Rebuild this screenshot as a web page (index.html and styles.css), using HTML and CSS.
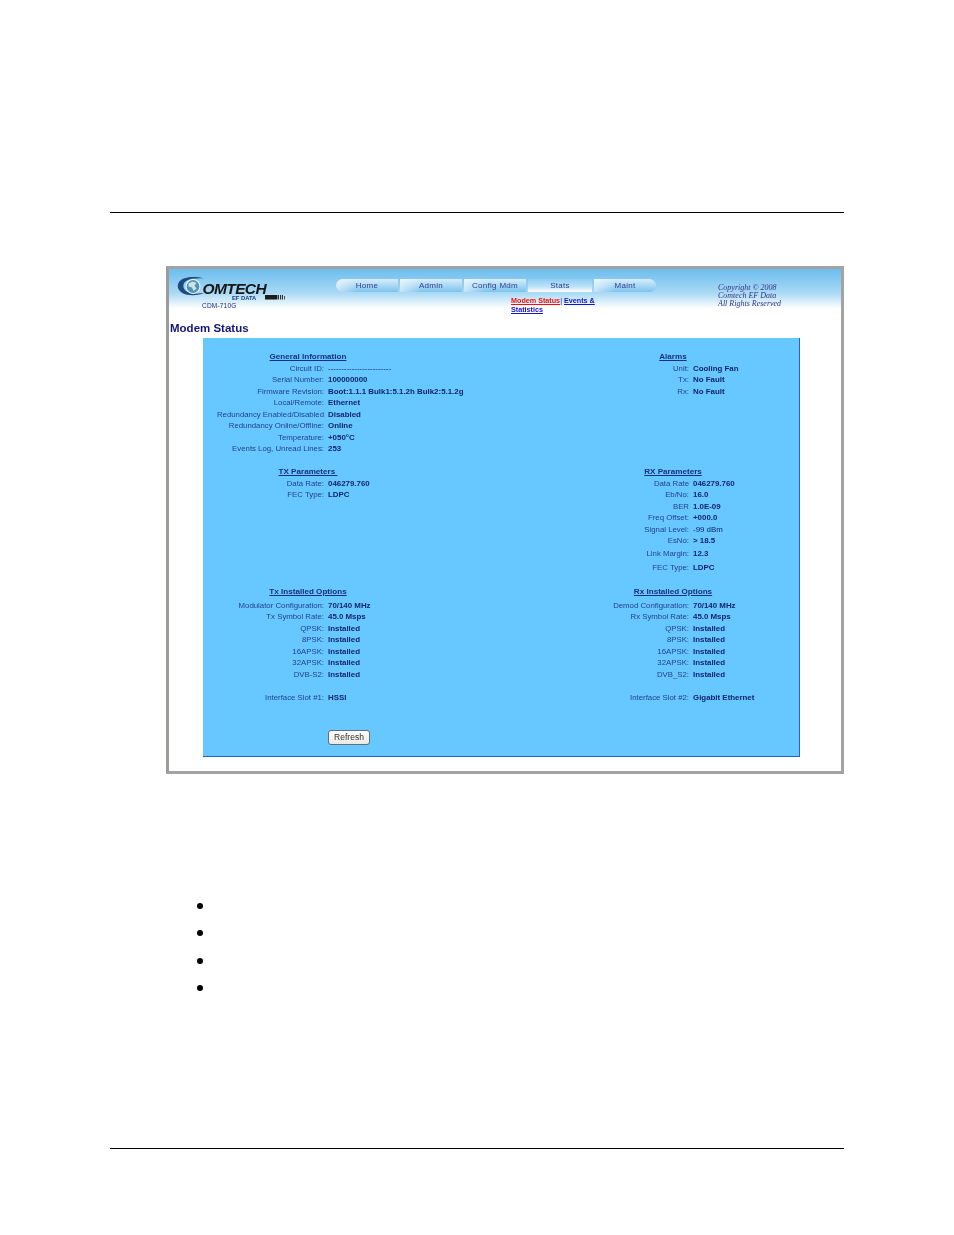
FILE: index.html
```html
<!DOCTYPE html>
<html lang="en">
<head>
  <meta charset="UTF-8">
  <title>Modem Status</title>
  <link rel="stylesheet" href="styles.css">
</head>
<body>
  <div class="page">
    <div class="rule rule-top"></div>

    <div class="shot">
      <div class="masthead">
        <div class="brand">
          <svg class="logo" width="116" height="24" viewBox="0 0 116 24">
            <path d="M27 1.5 C18 -1 6 -0.5 2 5 C-1 9.5 1.5 15.5 9 17.5 C15 18.8 23 18 27 16 C20 17 12 16.5 9 14 C5.5 11 5.5 6.5 9 4 C13 1.5 21 1 27 1.5 Z" fill="#1f4a80"/>
            <circle cx="16" cy="9.5" r="7.4" fill="#f2f8fb"/>
            <circle cx="16" cy="9.5" r="6.4" fill="#4f93bd"/>
            <path d="M11.5 6.5 L15.5 4.5 L19.5 6 L17.5 8.5 L19.5 11.5 L16.5 14 L15 10.5 L11.5 9.5 Z" fill="#cfe4dc"/>
            <text class="logo-word" x="25.5" y="17">OMTECH</text>
            <text class="logo-sub" x="55" y="23">EF DATA</text>
            <rect x="88" y="18" width="12" height="4.5" fill="#1b1b1b"/>
            <path d="M100.5 18 h1.5 v4.5 h-1.5 z M103 18 h1.2 v4.5 h-1.2 z M105 18 h1 v4.5 h-1 z M107 19 h0.8 v3.5 h-0.8 z" fill="#333"/>
          </svg>
          <div class="model">CDM-710G</div>
        </div>

        <div class="nav-area">
          <nav class="tabs">
            <a class="tab tab-first">Home</a>
            <a class="tab">Admin</a>
            <a class="tab">Config Mdm</a>
            <a class="tab tab-active">Stats</a>
            <a class="tab tab-last">Maint</a>
          </nav>
          <div class="subnav">
            <a class="sub-current">Modem Status</a><span class="sub-sep">|</span> <a>Events &amp;</a><br>
            <a>Statistics</a>
          </div>
        </div>

        <div class="copyright">
          Copyright &copy; 2008<br>
          Comtech EF Data<br>
          All Rights Reserved
        </div>
      </div>

      <h1 class="page-title">Modem Status</h1>

      <div class="panel">
        <section class="block">
          <h2>General Information</h2>
          <dl>
            <dt>Circuit ID:</dt><dd class="plain">------------------------</dd>
            <dt>Serial Number:</dt><dd>100000000</dd>
            <dt>Firmware Revision:</dt><dd>Boot:1.1.1 Bulk1:5.1.2h Bulk2:5.1.2g</dd>
            <dt>Local/Remote:</dt><dd>Ethernet</dd>
            <dt>Redundancy Enabled/Disabled</dt><dd>Disabled</dd>
            <dt>Redundancy Online/Offline:</dt><dd>Online</dd>
            <dt>Temperature:</dt><dd>+050&deg;C</dd>
            <dt>Events Log, Unread Lines:</dt><dd>253</dd>
          </dl>
        </section>
        <section class="block">
          <h2>Alarms</h2>
          <dl>
            <dt>Unit:</dt><dd>Cooling Fan</dd>
            <dt>Tx:</dt><dd>No Fault</dd>
            <dt>Rx:</dt><dd>No Fault</dd>
          </dl>
        </section>

        <section class="block">
          <h2>TX Parameters&nbsp;</h2>
          <dl>
            <dt>Data Rate:</dt><dd>046279.760</dd>
            <dt>FEC Type:</dt><dd>LDPC</dd>
          </dl>
        </section>
        <section class="block">
          <h2>RX Parameters</h2>
          <dl>
            <dt>Data Rate</dt><dd>046279.760</dd>
            <dt>Eb/No:</dt><dd>16.0</dd>
            <dt>BER</dt><dd>1.0E-09</dd>
            <dt>Freq Offset:</dt><dd>+000.0</dd>
            <dt>Signal Level:</dt><dd class="plain">-99 dBm</dd>
            <dt>EsNo:</dt><dd>&gt; 18.5</dd>
            <dt class="tall">Link Margin:</dt><dd class="tall">12.3</dd>
            <dt class="tall">FEC Type:</dt><dd class="tall">LDPC</dd>
          </dl>
        </section>

        <section class="block">
          <h2 class="spaced">Tx Installed Options</h2>
          <dl>
            <dt>Modulator Configuration:</dt><dd>70/140 MHz</dd>
            <dt>Tx Symbol Rate:</dt><dd>45.0 Msps</dd>
            <dt>QPSK:</dt><dd>Installed</dd>
            <dt>8PSK:</dt><dd>Installed</dd>
            <dt>16APSK:</dt><dd>Installed</dd>
            <dt>32APSK:</dt><dd>Installed</dd>
            <dt>DVB-S2:</dt><dd>Installed</dd>
            <dt class="slot">Interface Slot #1:</dt><dd class="slot">HSSI</dd>
          </dl>
        </section>
        <section class="block">
          <h2 class="spaced">Rx Installed Options</h2>
          <dl>
            <dt>Demod Configuration:</dt><dd>70/140 MHz</dd>
            <dt>Rx Symbol Rate:</dt><dd>45.0 Msps</dd>
            <dt>QPSK:</dt><dd>Installed</dd>
            <dt>8PSK:</dt><dd>Installed</dd>
            <dt>16APSK:</dt><dd>Installed</dd>
            <dt>32APSK:</dt><dd>Installed</dd>
            <dt>DVB_S2:</dt><dd>Installed</dd>
            <dt class="slot">Interface Slot #2:</dt><dd class="slot">Gigabit Ethernet</dd>
          </dl>
        </section>

        <div class="actions">
          <button class="refresh" type="button">Refresh</button>
        </div>
      </div>
    </div>

    <ul class="bullets">
      <li></li>
      <li></li>
      <li></li>
      <li></li>
    </ul>

    <div class="rule rule-bottom"></div>
  </div>
</body>
</html>
```

FILE: styles.css
```css
:root {
  --navy: #14147a;
  --label: #24408f;
  --value: #14246e;
  --panel: #66c8ff;
}

body {
  margin: 0;
  background: #ffffff;
  font-family: "Liberation Sans", Arial, sans-serif;
}

.page {
  width: 954px;
  height: 1235px;
  padding-top: 212px;
  box-sizing: border-box;
}

.rule {
  height: 1px;
  margin: 0 110px;
  background: #000000;
}

.rule-bottom {
  margin-top: 117px;
}

/* Browser screenshot placed in the document */
.shot {
  width: 678px;
  height: 508px;
  box-sizing: border-box;
  margin: 53px 0 0 166px;
  border: 3px solid #a3a3a3;
  border-left-color: #9c9c98;
  background: #ffffff;
  filter: blur(0.4px);
}

.masthead {
  display: flex;
  height: 48px;
  background: linear-gradient(to bottom, #6cbdee 0%, #a9d9f5 50%, #ffffff 82%);
}

.brand {
  width: 167px;
  padding: 8px 0 0 8px;
  box-sizing: border-box;
  flex: none;
}

.logo {
  display: block;
  overflow: visible;
}

.logo-word {
  font-family: "Liberation Sans", Arial, sans-serif;
  font-size: 15.5px;
  font-style: italic;
  font-weight: bold;
  letter-spacing: -0.6px;
  fill: #161616;
}

.logo-sub {
  font-family: "Liberation Sans", Arial, sans-serif;
  font-size: 5.8px;
  font-weight: bold;
  fill: #1d3a80;
}

.model {
  margin: 1px 0 0 25px;
  font-size: 6.5px;
  letter-spacing: 0.2px;
  color: #1c2a78;
  line-height: 8px;
}

.nav-area {
  width: 320px;
  padding-top: 10px;
  flex: none;
}

.tabs {
  display: flex;
  gap: 2px;
}

.tab {
  width: 62px;
  height: 13px;
  font-size: 8px;
  line-height: 13px;
  text-align: center;
  letter-spacing: 0.3px;
  color: #2a3f8c;
  background:
    linear-gradient(to right, rgba(255, 255, 255, 0.55), rgba(255, 255, 255, 0) 35%),
    linear-gradient(to bottom, #d6edfb 0%, #a6d6f4 55%, #7cc3ee 100%);
}

.tab-first {
  border-radius: 7px 0 0 7px;
}

.tab-last {
  border-radius: 0 7px 7px 0;
}

.tab-active {
  width: 64px;
  background: linear-gradient(to bottom, #8fcdf2 0%, #bfe3f8 60%, #ffffff 100%);
}

.subnav {
  width: 90px;
  margin: 3.5px 0 0 175px;
  font-size: 7.2px;
  font-weight: bold;
  line-height: 9.5px;
}

.subnav a {
  color: #1414c8;
  text-decoration: underline;
}

.subnav .sub-current {
  color: #f01010;
}

.sub-sep {
  font-weight: normal;
  color: #1414c8;
}

.copyright {
  margin: 15px 0 0 62px;
  font-family: "Liberation Serif", "Times New Roman", serif;
  font-size: 8px;
  font-style: italic;
  line-height: 8.2px;
  color: #33337f;
}

.page-title {
  margin: 4px 0 0 1px;
  font-size: 11.5px;
  line-height: 14px;
  font-weight: bold;
  color: var(--navy);
}

.panel {
  display: grid;
  grid-template-columns: 210px 210px;
  column-gap: 155px;
  align-content: start;
  width: 597px;
  height: 419px;
  box-sizing: border-box;
  margin: 3px 0 0 34px;
  padding-top: 13px;
  row-gap: 11.5px;
  background: var(--panel);
  border-right: 1px solid #2f5fc4;
  border-bottom: 1px solid #2f5fc4;
}

.block h2 {
  margin: 0;
  font-size: 8.1px;
  line-height: 11.5px;
  font-weight: bold;
  text-align: center;
  text-decoration: underline;
  color: #1a2f80;
}

.block h2.spaced {
  margin: 1px 0 2px;
}

.block dl {
  display: grid;
  grid-template-columns: 121px 1fr;
  column-gap: 4px;
  margin: 0;
  font-size: 7.9px;
  line-height: 11.5px;
  white-space: nowrap;
}

.block dt {
  font-size: 7.8px;
  text-align: right;
  color: var(--label);
}

.block dd {
  margin: 0;
  font-weight: bold;
  color: var(--value);
}

.block dd.plain {
  font-weight: normal;
}

.block .tall {
  line-height: 13px;
  padding-top: 0.5px;
}

.block .slot {
  margin-top: 11.5px;
}

.actions {
  grid-column: 1 / -1;
  padding: 15px 0 0 125px;
}

.refresh {
  display: block;
  width: 42px;
  height: 15px;
  padding: 0;
  font-family: "Liberation Sans", Arial, sans-serif;
  font-size: 8.5px;
  color: #333333;
  background: linear-gradient(to bottom, #ffffff, #ece9e0);
  border: 1px solid #5f6f80;
  border-radius: 3px;
}

.bullets {
  margin: 0;
  padding: 129px 0 0 197px;
  list-style: none;
  height: 257px;
  box-sizing: border-box;
  display: flex;
  flex-direction: column;
  gap: 21.3px;
}

.bullets li {
  width: 6px;
  height: 6px;
  flex: none;
  border-radius: 50%;
  background: #000000;
}
```
